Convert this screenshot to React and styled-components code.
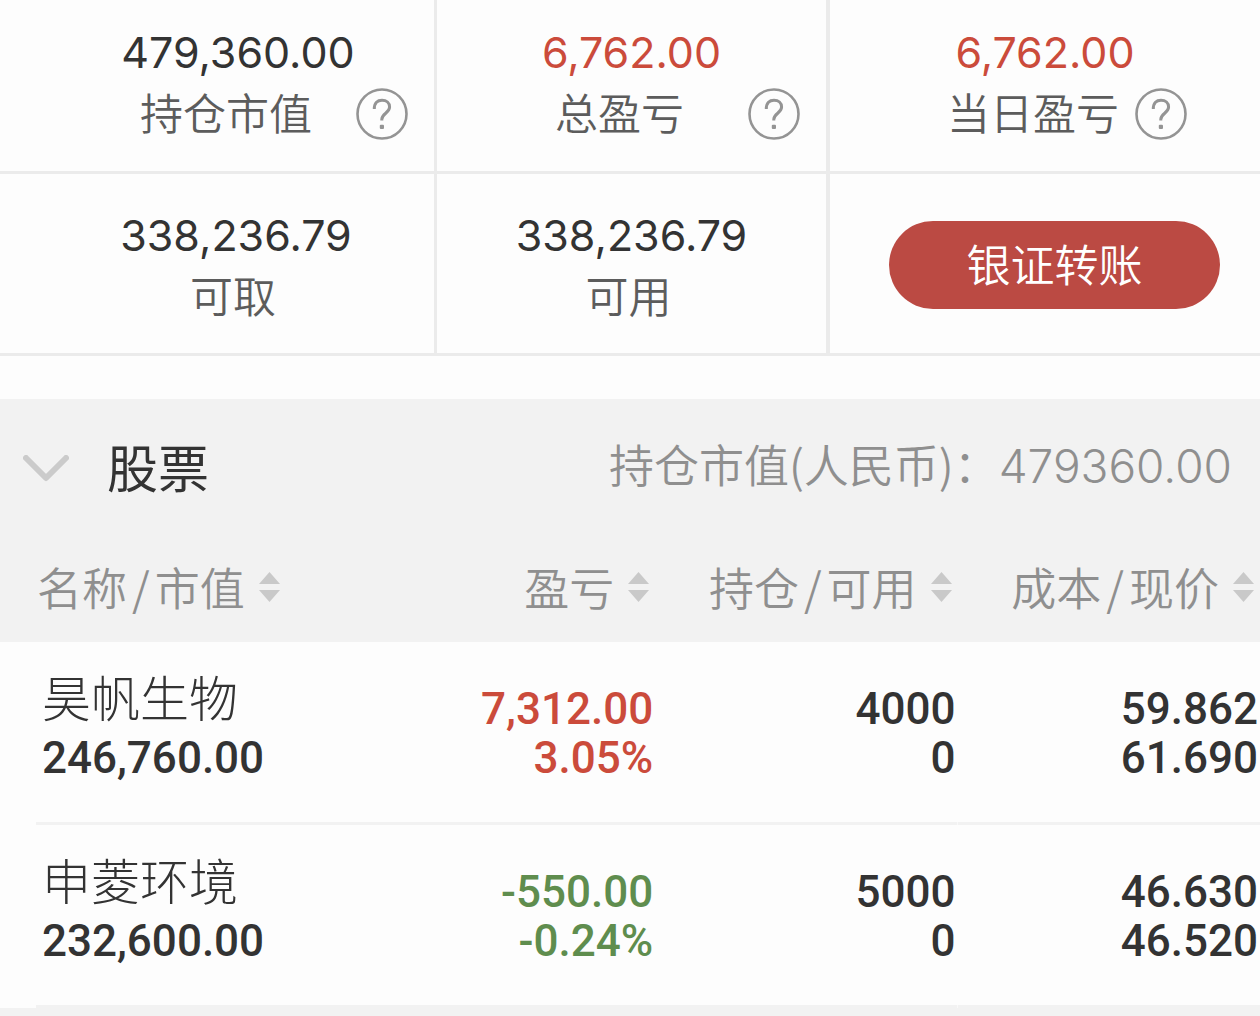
import React from "react";
import styled, { createGlobalStyle } from "styled-components";

const cjk = `"Noto Sans CJK SC", sans-serif`;

const GlobalStyle = createGlobalStyle`
  * { box-sizing: border-box; }
  body {
    margin: 0;
    background: #f2f2f2;
    color: #333;
    font-family: ${cjk};
  }
  button {
    margin: 0;
    padding: 0;
    border: 0;
    background: none;
    color: inherit;
    font: inherit;
    cursor: pointer;
  }
`;

const Page = styled.main`
  overflow: hidden;
`;

const Summary = styled.section`
  display: grid;
  grid-template-columns: 437fr 393fr 430fr;
  padding-bottom: 43px;
  background: #fdfdfd;
`;

const Cell = styled.div`
  padding: ${(p) => p.$pad};
  border-bottom: 3px solid #ebebeb;
  border-right: ${(p) => p.$line || 0}px solid #ebebeb;
`;

const Figure = styled.div`
  font: 400 43px/60px Inter, sans-serif;
  text-align: center;
  color: ${(p) => (p.$gain ? "#cb4b3b" : "#333")};
`;

const Caption = styled.div`
  display: flex;
  align-items: center;
  height: 64px;
  padding: 0 ${(p) => (p.$plain ? 6 : 0)}px 0 ${(p) => (p.$plain ? 0 : 28)}px;
  font-size: 43px;
  line-height: 58px;
  font-weight: 350;
  color: #5c5c5c;
  white-space: nowrap;
`;

const CaptionText = styled.span`
  flex: 1;
  padding-bottom: 6px;
  text-align: center;
`;

const HelpButton = styled.button`
  flex: none;
  width: 52px;
  height: 52px;
  svg { display: block; }
`;

const TransferButton = styled.button`
  display: block;
  width: 100%;
  height: 88px;
  padding-bottom: 4px;
  border-radius: 44px;
  background: #bb4a43;
  color: #fff;
  font-size: 44px;
  font-weight: 350;
  line-height: 84px;
`;

const GroupBar = styled.div`
  display: flex;
  align-items: center;
  justify-content: space-between;
  height: 136px;
  padding: 2px 28px 0 23px;
`;

const GroupToggle = styled.button`
  display: flex;
  align-items: center;
  gap: 38px;
  font-size: 51px;
  line-height: 64px;
`;

const GroupName = styled.span`
  padding-bottom: 4px;
`;

const GroupTotal = styled.div`
  padding-bottom: 6px;
  font-size: 45px;
  line-height: 64px;
  font-weight: 350;
  color: #8f8f8f;
  white-space: nowrap;
`;

const TotalNumber = styled.span`
  font: 300 46px/64px Inter, sans-serif;
`;

const Table = styled.table`
  width: 100%;
  table-layout: fixed;
  border-collapse: collapse;
`;

const Col = styled.col`
  width: ${(p) => p.$share}%;
`;

const HeadCell = styled.th`
  height: 107px;
  padding: 0 6px 3px ${(p) => (p.$first ? 37 : 0)}px;
  font-weight: 350;
  text-align: ${(p) => (p.$first ? "left" : "right")};
`;

const SortButton = styled.button`
  display: inline-flex;
  align-items: center;
  gap: 14px;
  font-size: 45px;
  line-height: 64px;
  color: #8f8f8f;
  white-space: nowrap;
`;

const Slash = styled.span`
  padding: 0 5px;
`;

const BodyCell = styled.td`
  height: 183px;
  padding: ${(p) => (p.$first ? "20px 0 0 42px" : "43px 2px 0 0")};
  vertical-align: top;
  text-align: ${(p) => (p.$first ? "left" : "right")};
  background:
    linear-gradient(#f2f2f2, #f2f2f2) right bottom /
      ${(p) => (p.$first ? "calc(100% - 36px)" : "100%")} 3px no-repeat,
    #fdfdfd;
`;

const StockName = styled.div`
  padding-bottom: 5px;
  font-size: 49px;
  line-height: 67px;
  font-weight: 300;
`;

const tones = { up: "#cb4b3b", down: "#5f8d4e", flat: "#333" };

const Amount = styled.div`
  font: 500 44px/49px Roboto, sans-serif;
  color: ${(p) => tones[p.$tone || "flat"]};
`;

function HelpIcon() {
  return (
    <svg width="52" height="52" viewBox="0 0 52 52" fill="none" aria-hidden="true">
      <circle cx="26" cy="26" r="24.5" stroke="#949494" strokeWidth="2.6" />
      <path
        d="M18.3 21C18.3 14.8 21.5 12.3 26 12.3C30.5 12.3 33.6 15.2 33.6 19C33.6 25 25.8 25.5 25.8 31.5V32.5"
        stroke="#949494"
        strokeWidth="3"
      />
      <rect x="23.8" y="36.8" width="4.2" height="4.2" rx="1" fill="#949494" />
    </svg>
  );
}

function ChevronIcon() {
  return (
    <svg width="46" height="27" viewBox="0 0 46 27" fill="none" aria-hidden="true">
      <path
        d="M3 3L23 23L43 3"
        stroke="#cbcbcb"
        strokeWidth="6"
        strokeLinecap="round"
        strokeLinejoin="round"
      />
    </svg>
  );
}

function SortIcon() {
  return (
    <svg width="21" height="30" viewBox="0 0 21 30" fill="#c9c9c9" aria-hidden="true">
      <path d="M10.5 0L21 12H0Z" />
      <path d="M0 18H21L10.5 30Z" />
    </svg>
  );
}

function HelpCaption({ children }) {
  return (
    <Caption>
      <CaptionText>{children}</CaptionText>
      <HelpButton type="button" aria-label={children}>
        <HelpIcon />
      </HelpButton>
    </Caption>
  );
}

function PlainCaption({ children }) {
  return (
    <Caption $plain>
      <CaptionText>{children}</CaptionText>
    </Caption>
  );
}

const headings = [["名称", "市值"], ["盈亏"], ["持仓", "可用"], ["成本", "现价"]];

const stocks = [
  {
    name: "昊帆生物",
    value: "246,760.00",
    tone: "up",
    profit: ["7,312.00", "3.05%"],
    holding: ["4000", "0"],
    price: ["59.862", "61.690"],
  },
  {
    name: "申菱环境",
    value: "232,600.00",
    tone: "down",
    profit: ["-550.00", "-0.24%"],
    holding: ["5000", "0"],
    price: ["46.630", "46.520"],
  },
];

function AmountCell({ values, tone }) {
  return (
    <BodyCell>
      {values.map((value, i) => (
        <Amount key={i} $tone={tone}>{value}</Amount>
      ))}
    </BodyCell>
  );
}

export default function App() {
  return (
    <Page lang="zh-CN">
      <GlobalStyle />
      <Summary>
        <Cell $pad="22px 26px 25px 68px" $line={3}>
          <Figure>479,360.00</Figure>
          <HelpCaption>持仓市值</HelpCaption>
        </Cell>
        <Cell $pad="22px 26px 25px" $line={4}>
          <Figure $gain>6,762.00</Figure>
          <HelpCaption>总盈亏</HelpCaption>
        </Cell>
        <Cell $pad="22px 73px 25px">
          <Figure $gain>6,762.00</Figure>
          <HelpCaption>当日盈亏</HelpCaption>
        </Cell>
        <Cell $pad="31px 26px 24px 64px" $line={3}>
          <Figure>338,236.79</Figure>
          <PlainCaption>可取</PlainCaption>
        </Cell>
        <Cell $pad="31px 26px 24px" $line={4}>
          <Figure>338,236.79</Figure>
          <PlainCaption>可用</PlainCaption>
        </Cell>
        <Cell $pad="47px 40px 44px 59px">
          <TransferButton type="button">银证转账</TransferButton>
        </Cell>
      </Summary>

      <section>
        <GroupBar>
          <GroupToggle type="button" aria-expanded="true">
            <ChevronIcon />
            <GroupName>股票</GroupName>
          </GroupToggle>
          <GroupTotal>
            持仓市值(人民币)：<TotalNumber>479360.00</TotalNumber>
          </GroupTotal>
        </GroupBar>
        <Table>
          <colgroup>
            <Col $share={28} />
            <Col $share={24} />
            <Col $share={24} />
            <Col $share={24} />
          </colgroup>
          <thead>
            <tr>
              {headings.map(([top, bottom], i) => (
                <HeadCell key={top} scope="col" $first={i === 0}>
                  <SortButton type="button">
                    <span>
                      {top}
                      {bottom && <Slash>/</Slash>}
                      {bottom}
                    </span>
                    <SortIcon />
                  </SortButton>
                </HeadCell>
              ))}
            </tr>
          </thead>
          <tbody>
            {stocks.map((stock) => (
              <tr key={stock.name}>
                <BodyCell $first>
                  <StockName>{stock.name}</StockName>
                  <Amount>{stock.value}</Amount>
                </BodyCell>
                <AmountCell values={stock.profit} tone={stock.tone} />
                <AmountCell values={stock.holding} />
                <AmountCell values={stock.price} />
              </tr>
            ))}
          </tbody>
        </Table>
      </section>
    </Page>
  );
}
